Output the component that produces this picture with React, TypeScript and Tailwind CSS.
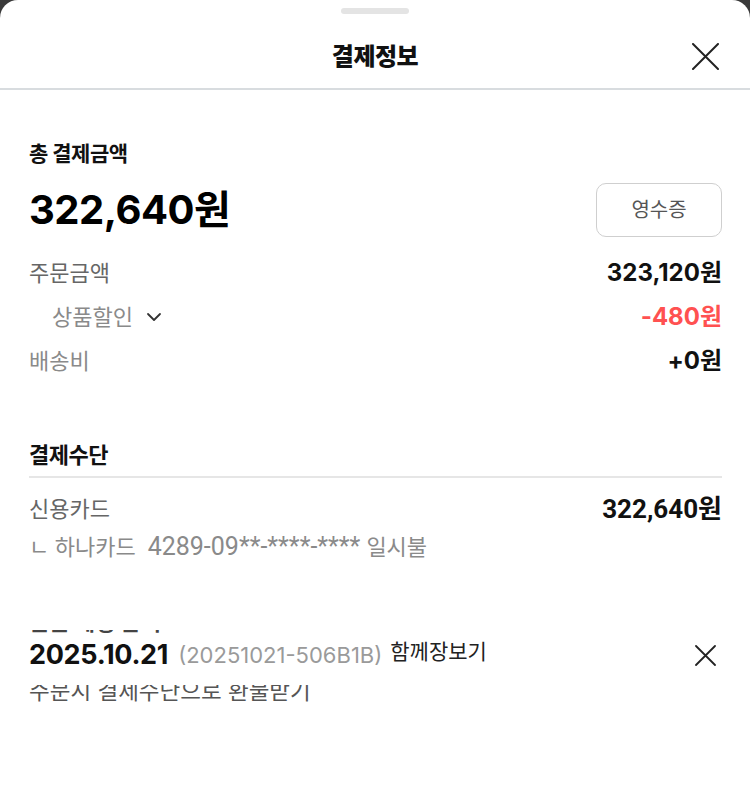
import React from "react";

const FONT = { fontFamily: 'Inter, "Noto Sans CJK KR", sans-serif' };
const ROBOTO = { fontFamily: 'Roboto, "Noto Sans CJK KR", sans-serif' };

function XIcon({ size, stroke }: { size: number; stroke: number }) {
  return (
    <svg width={size} height={size} viewBox={`0 0 ${size} ${size}`} fill="none">
      <path
        d={`M1 1L${size - 1} ${size - 1}M${size - 1} 1L1 ${size - 1}`}
        stroke="#222"
        strokeWidth={stroke}
        strokeLinecap="round"
      />
    </svg>
  );
}

function ChevronDown() {
  return (
    <svg width="16" height="10" viewBox="0 0 16 10" fill="none">
      <path d="M2 2L8 8L14 2" stroke="#333" strokeWidth="1.8" strokeLinecap="round" strokeLinejoin="round" />
    </svg>
  );
}

export default function App() {
  return (
    <div className="w-[750px] h-[810px] bg-[#3a3a3a] overflow-hidden" style={FONT}>
      <div className="w-full h-full bg-white rounded-t-[18px] flex flex-col">
        {/* handle */}
        <div className="h-[20px] flex justify-center pt-[8px]">
          <div className="w-[68px] h-[6px] rounded-full bg-[#e4e4e4]" />
        </div>
        {/* header */}
        <div className="h-[70px] relative flex items-center justify-center pt-[5px] border-b-2 border-[#d8dcdf]">
          <span className="text-[24px] font-extrabold text-[#111] tracking-[-0.5px]">결제정보</span>
          <button className="absolute right-[31px] top-[23px]">
            <XIcon size={27} stroke={2} />
          </button>
        </div>

        <div className="px-[29px] pr-[28px]">
          {/* 총 결제금액 */}
          <div className="pt-[51px] h-[26px] box-content flex items-center text-[21px] font-bold text-[#111] tracking-[-0.5px]">
            총 결제금액
          </div>
          <div className="mt-[16px] h-[54px] flex items-center justify-between">
            <span className="text-[40px] font-bold text-black tracking-[-0.5px] leading-none">322,640원</span>
            <button className="w-[126px] h-[54px] rounded-[10px] border border-[#cfcfcf] text-[20px] text-[#555]">
              영수증
            </button>
          </div>

          <div className="mt-[14px]">
            <div className="h-[44px] flex items-center justify-between">
              <span className="text-[22px] text-[#666]">주문금액</span>
              <span className="text-[24px] font-bold text-[#111]">323,120원</span>
            </div>
            <div className="h-[44px] flex items-center justify-between">
              <span className="pl-[23px] flex items-center gap-[13px] text-[22px] text-[#8a8a8a]">
                상품할인
                <ChevronDown />
              </span>
              <span className="text-[24px] font-bold text-[#ff5151]">-480원</span>
            </div>
            <div className="h-[44px] flex items-center justify-between">
              <span className="text-[22px] text-[#8a8a8a]">배송비</span>
              <span className="text-[24px] font-bold text-[#111]">+0원</span>
            </div>
          </div>

          {/* 결제수단 */}
          <div className="mt-[57px] h-[30px] flex items-center text-[22px] font-bold text-[#111] tracking-[-0.5px]">
            결제수단
          </div>
          <div className="mt-[6px] h-[2px] bg-[#e6e6e6]" />
          <div className="mt-[11px] h-[40px] flex items-center justify-between" style={ROBOTO}>
            <span className="text-[22px] text-[#666]">신용카드</span>
            <span className="text-[26px] font-bold text-[#111]">322,640원</span>
          </div>
          <div className="h-[36px] flex items-center text-[22px] text-[#8a8a8a] whitespace-nowrap" style={ROBOTO}>
            <span>ㄴ 하나카드</span>
            <span className="ml-[12px] text-[25px]">4289-09**-****-****</span>
            <span className="ml-[6px]">일시불</span>
          </div>

          {/* clipped line */}
          <div className="mt-[65px] h-[3px] overflow-hidden">
            <div className="-mt-[20px] leading-[24px] text-[22px] font-bold text-[#444] whitespace-nowrap">
              환불 예정 금액
            </div>
          </div>

          <div className="mt-[4px] h-[36px] flex items-center justify-between">
            <div className="flex items-center whitespace-nowrap">
              <span className="text-[27px] font-bold text-[#111] tracking-[-0.3px]">2025.10.21</span>
              <span className="ml-[10px] text-[22px] text-[#9a9a9a]">(20251021-506B1B)</span>
              <span className="ml-[8px] -mt-[6px] text-[21px] text-[#222]">함께장보기</span>
            </div>
            <span className="mr-[6px]">
              <XIcon size={21} stroke={1.8} />
            </span>
          </div>

          <div className="mt-[12px] h-[22px] overflow-hidden">
            <div className="-mt-[8px] leading-[28px] text-[22.5px] text-[#555] whitespace-nowrap">
              주문시 결제수단으로 환불받기
            </div>
          </div>
        </div>
      </div>
    </div>
  );
}
